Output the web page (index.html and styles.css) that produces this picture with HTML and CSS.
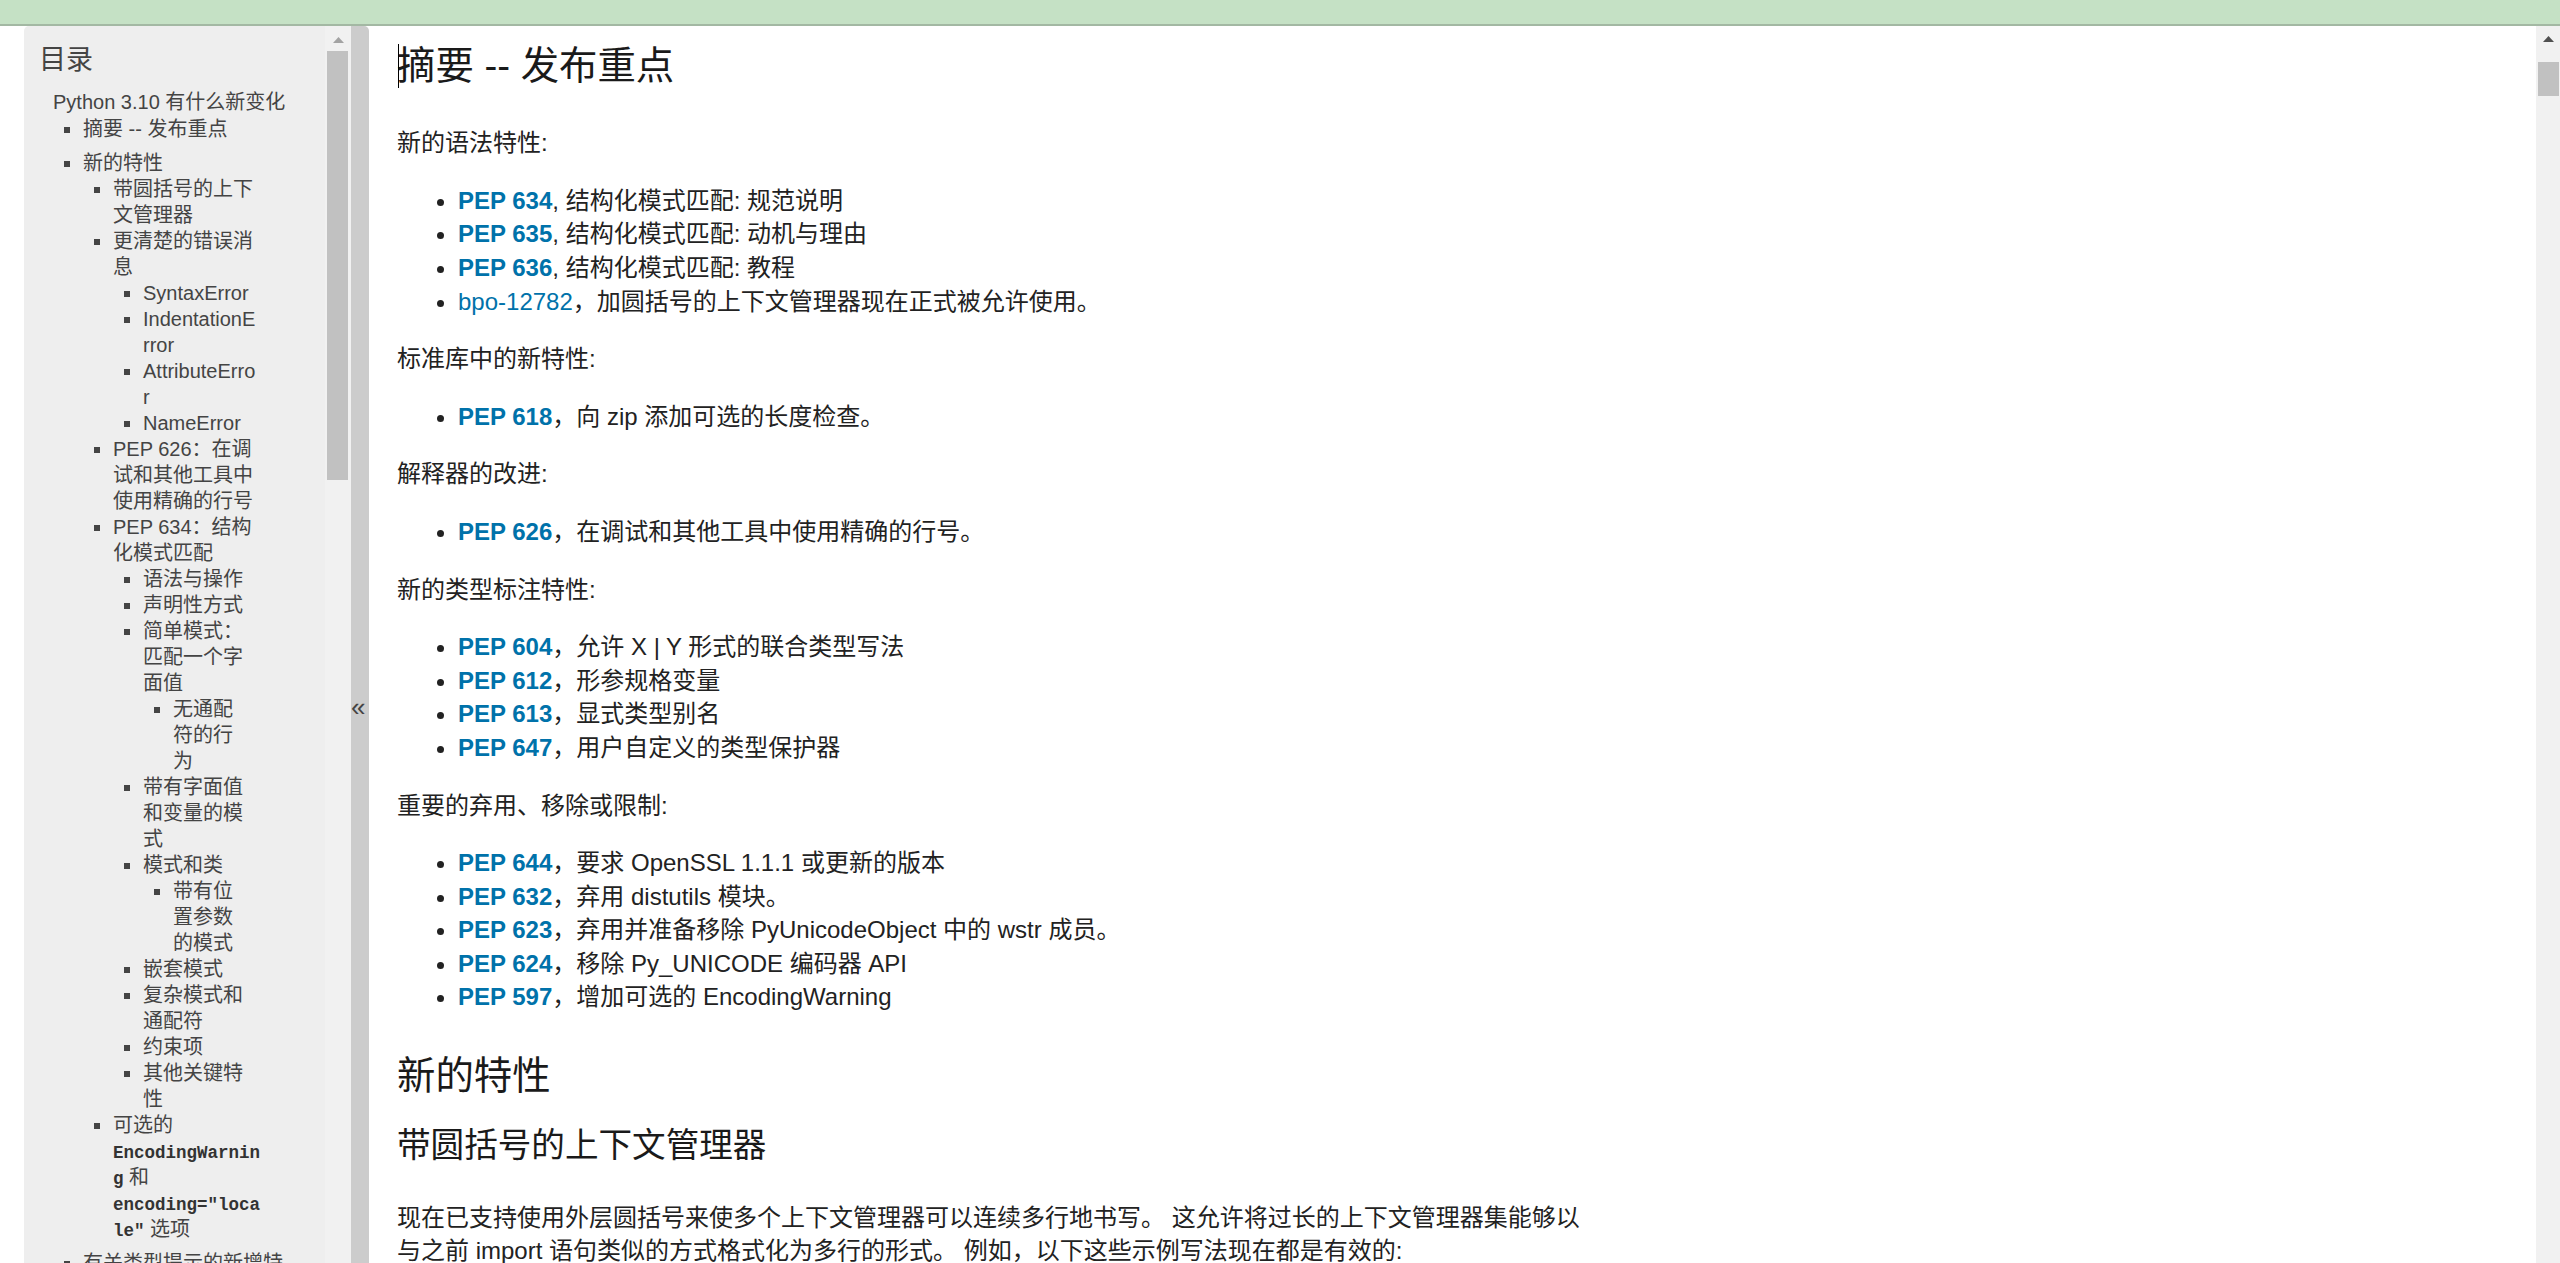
FILE: index.html
```html
<!DOCTYPE html>
<html lang="zh-CN">
<head>
<meta charset="utf-8">
<title>Python 3.10 有什么新变化</title>
<link rel="stylesheet" href="styles.css">
</head>
<body>
<div class="topbar"></div>
<div class="window">
  <div class="sidebar">
    <div class="sb-content">
      <h3 class="sb-title">目录</h3>
      <ul class="toc0">
        <li>Python 3.10 有什么新变化
          <ul class="toc1">
            <li>摘要 -- 发布重点</li>
            <li>新的特性
              <ul class="toc2">
                <li>带圆括号的上下文管理器</li>
                <li>更清楚的错误消息
                  <ul class="toc3">
                    <li>SyntaxError</li>
                    <li>IndentationError</li>
                    <li>AttributeError</li>
                    <li>NameError</li>
                  </ul>
                </li>
                <li>PEP 626：在调试和其他工具中使用精确的行号</li>
                <li>PEP 634：结构化模式匹配
                  <ul class="toc3">
                    <li>语法与操作</li>
                    <li>声明性方式</li>
                    <li>简单模式：匹配一个字面值
                      <ul class="toc4">
                        <li>无通配符的行为</li>
                      </ul>
                    </li>
                    <li>带有字面值和变量的模式</li>
                    <li>模式和类
                      <ul class="toc4">
                        <li>带有位置参数的模式</li>
                      </ul>
                    </li>
                    <li>嵌套模式</li>
                    <li>复杂模式和通配符</li>
                    <li>约束项</li>
                    <li>其他关键特性</li>
                  </ul>
                </li>
                <li>可选的 <code class="sb-code">EncodingWarning</code> 和 <code class="sb-code">encoding="locale"</code> 选项</li>
              </ul>
            </li>
            <li>有关类型提示的新增特性</li>
            <li>其他语言特性修改</li>
            <li>新增模块</li>
          </ul>
        </li>
      </ul>
    </div>
    <div class="sb-track">
      <div class="sb-arrow"><svg width="11" height="6" viewBox="0 0 11 6"><polygon points="0,6 5.5,0 11,6" fill="#a3a3a3"/></svg></div>
      <div class="sb-thumb"></div>
    </div>
    <div class="sb-button">«</div>
  </div>

  <div class="main">
    <div class="doc-body">
      <h2 class="h2-top"><span class="caret"></span>摘要 -- 发布重点</h2>
      <p>新的语法特性:</p>
      <ul>
        <li><a class="pep"><strong>PEP 634</strong></a>, 结构化模式匹配: 规范说明</li>
        <li><a class="pep"><strong>PEP 635</strong></a>, 结构化模式匹配: 动机与理由</li>
        <li><a class="pep"><strong>PEP 636</strong></a>, 结构化模式匹配: 教程</li>
        <li><a class="pep">bpo-12782</a>，加圆括号的上下文管理器现在正式被允许使用。</li>
      </ul>
      <p>标准库中的新特性:</p>
      <ul>
        <li><a class="pep"><strong>PEP 618</strong></a>，向 zip 添加可选的长度检查。</li>
      </ul>
      <p>解释器的改进:</p>
      <ul>
        <li><a class="pep"><strong>PEP 626</strong></a>，在调试和其他工具中使用精确的行号。</li>
      </ul>
      <p>新的类型标注特性:</p>
      <ul>
        <li><a class="pep"><strong>PEP 604</strong></a>，允许 X | Y 形式的联合类型写法</li>
        <li><a class="pep"><strong>PEP 612</strong></a>，形参规格变量</li>
        <li><a class="pep"><strong>PEP 613</strong></a>，显式类型别名</li>
        <li><a class="pep"><strong>PEP 647</strong></a>，用户自定义的类型保护器</li>
      </ul>
      <p>重要的弃用、移除或限制:</p>
      <ul>
        <li><a class="pep"><strong>PEP 644</strong></a>，要求 OpenSSL 1.1.1 或更新的版本</li>
        <li><a class="pep"><strong>PEP 632</strong></a>，弃用 distutils 模块。</li>
        <li><a class="pep"><strong>PEP 623</strong></a>，弃用并准备移除 PyUnicodeObject 中的 wstr 成员。</li>
        <li><a class="pep"><strong>PEP 624</strong></a>，移除 Py_UNICODE 编码器 API</li>
        <li><a class="pep"><strong>PEP 597</strong></a>，增加可选的 EncodingWarning</li>
      </ul>
      <h2 class="h2-next">新的特性</h2>
      <h3 class="h3-sec">带圆括号的上下文管理器</h3>
      <p>现在已支持使用外层圆括号来使多个上下文管理器可以连续多行地书写。 这允许将过长的上下文管理器集能够以与之前 import 语句类似的方式格式化为多行的形式。 例如，以下这些示例写法现在都是有效的:</p>
    </div>
  </div>

  <div class="vscroll">
    <div class="vs-arrow"><svg width="11" height="6" viewBox="0 0 11 6"><polygon points="0,6 5.5,0 11,6" fill="#505050"/></svg></div>
    <div class="vs-thumb"></div>
  </div>
</div>
</body>
</html>
```

FILE: styles.css
```css
* {
  box-sizing: border-box;
}

html,
body {
  margin: 0;
  padding: 0;
  height: 1263px;
  overflow: hidden;
}

body {
  font-family: "Liberation Sans", "Noto Sans CJK SC", sans-serif;
  background: #ffffff;
}

.topbar {
  height: 26px;
  background: #c5e1c5;
  border-bottom: 2px solid #a3b8a3;
}

.window {
  display: flex;
  height: 1237px;
}

/* ---------- sidebar ---------- */

.sidebar {
  display: flex;
  margin-left: 24px;
  height: 100%;
}

.sb-content {
  width: 301px;
  height: 100%;
  background: #eeeeee;
  border-top-left-radius: 5px;
  overflow: hidden;
  padding: 17px 32px 0 15px;
  color: #444444;
  overflow-wrap: break-word;
}

.sb-title {
  margin: 0 0 11px;
  font-size: 27px;
  line-height: 35px;
  font-weight: normal;
  color: #444444;
}

.toc0 {
  list-style: none;
  margin: 0 0 0 14px;
  padding: 0;
  font-size: 20px;
  line-height: 26px;
}

.toc1 {
  list-style: square;
  margin: 1px 0 0;
  padding: 0 0 0 30px;
}

.toc1 > li + li {
  margin-top: 8px;
}

.toc2 {
  list-style: square;
  margin: 0;
  padding: 0 28px 0 30px;
}

.toc3 {
  list-style: square;
  margin: 0;
  padding: 0 6.4px 0 30px;
}

.toc4 {
  list-style: square;
  margin: 0;
  padding: 0 15.6px 0 30px;
}

.sb-code {
  font-family: "Liberation Mono", "DejaVu Sans Mono", monospace;
  font-size: 17.5px;
  font-weight: bold;
  line-height: 20px;
  color: #333333;
}

.sb-track {
  width: 26px;
  height: 100%;
  background: #f1f1f1;
  display: flex;
  flex-direction: column;
}

.sb-arrow {
  height: 25px;
  display: flex;
  justify-content: center;
  padding-top: 10.5px;
}

.sb-arrow svg {
  display: block;
}

.sb-thumb {
  width: 21px;
  height: 429px;
  margin-left: 2px;
  background: #c1c1c1;
}

.sb-button {
  width: 18px;
  height: 100%;
  background: #cccccc;
  border-top-right-radius: 5px;
  color: #444444;
  font-family: "Liberation Sans", sans-serif;
  font-size: 26px;
  line-height: 26px;
  padding-top: 668px;
  padding-left: 0;
}

/* ---------- main ---------- */

.main {
  flex: 1;
  height: 100%;
  overflow: hidden;
  padding: 17px 0 0 28px;
  color: #222222;
  font-size: 24px;
  line-height: 33.6px;
}

.doc-body {
  max-width: 1200px;
}

.doc-body h2,
.doc-body h3 {
  font-weight: normal;
  color: #1a1a1a;
}

.doc-body h2 {
  font-size: 38.4px;
  line-height: 46px;
}

.h2-top {
  position: relative;
  margin: 0 0 37.2px;
}

.caret {
  position: absolute;
  left: 1px;
  top: 1px;
  width: 1px;
  height: 44px;
  background: #000000;
}

.h2-next {
  margin: 38.8px 0 26.8px;
}

.h3-sec {
  font-size: 33.6px;
  line-height: 40px;
  margin: 0 0 35px;
}

.doc-body p {
  margin: 24px 0;
}

.doc-body ul {
  margin: 24px 0;
  padding-left: 61px;
  list-style: disc;
}

.pep {
  color: #0072aa;
  text-decoration: none;
}

.pep strong {
  font-weight: bold;
}

/* ---------- page scrollbar ---------- */

.vscroll {
  width: 24px;
  height: 100%;
  background: #f1f1f1;
  display: flex;
  flex-direction: column;
}

.vs-arrow {
  height: 24px;
  display: flex;
  justify-content: center;
  padding-top: 10px;
}

.vs-arrow svg {
  display: block;
}

.vs-thumb {
  width: 21px;
  height: 34px;
  margin: 12px 0 0 2px;
  background: #c1c1c1;
}
```
